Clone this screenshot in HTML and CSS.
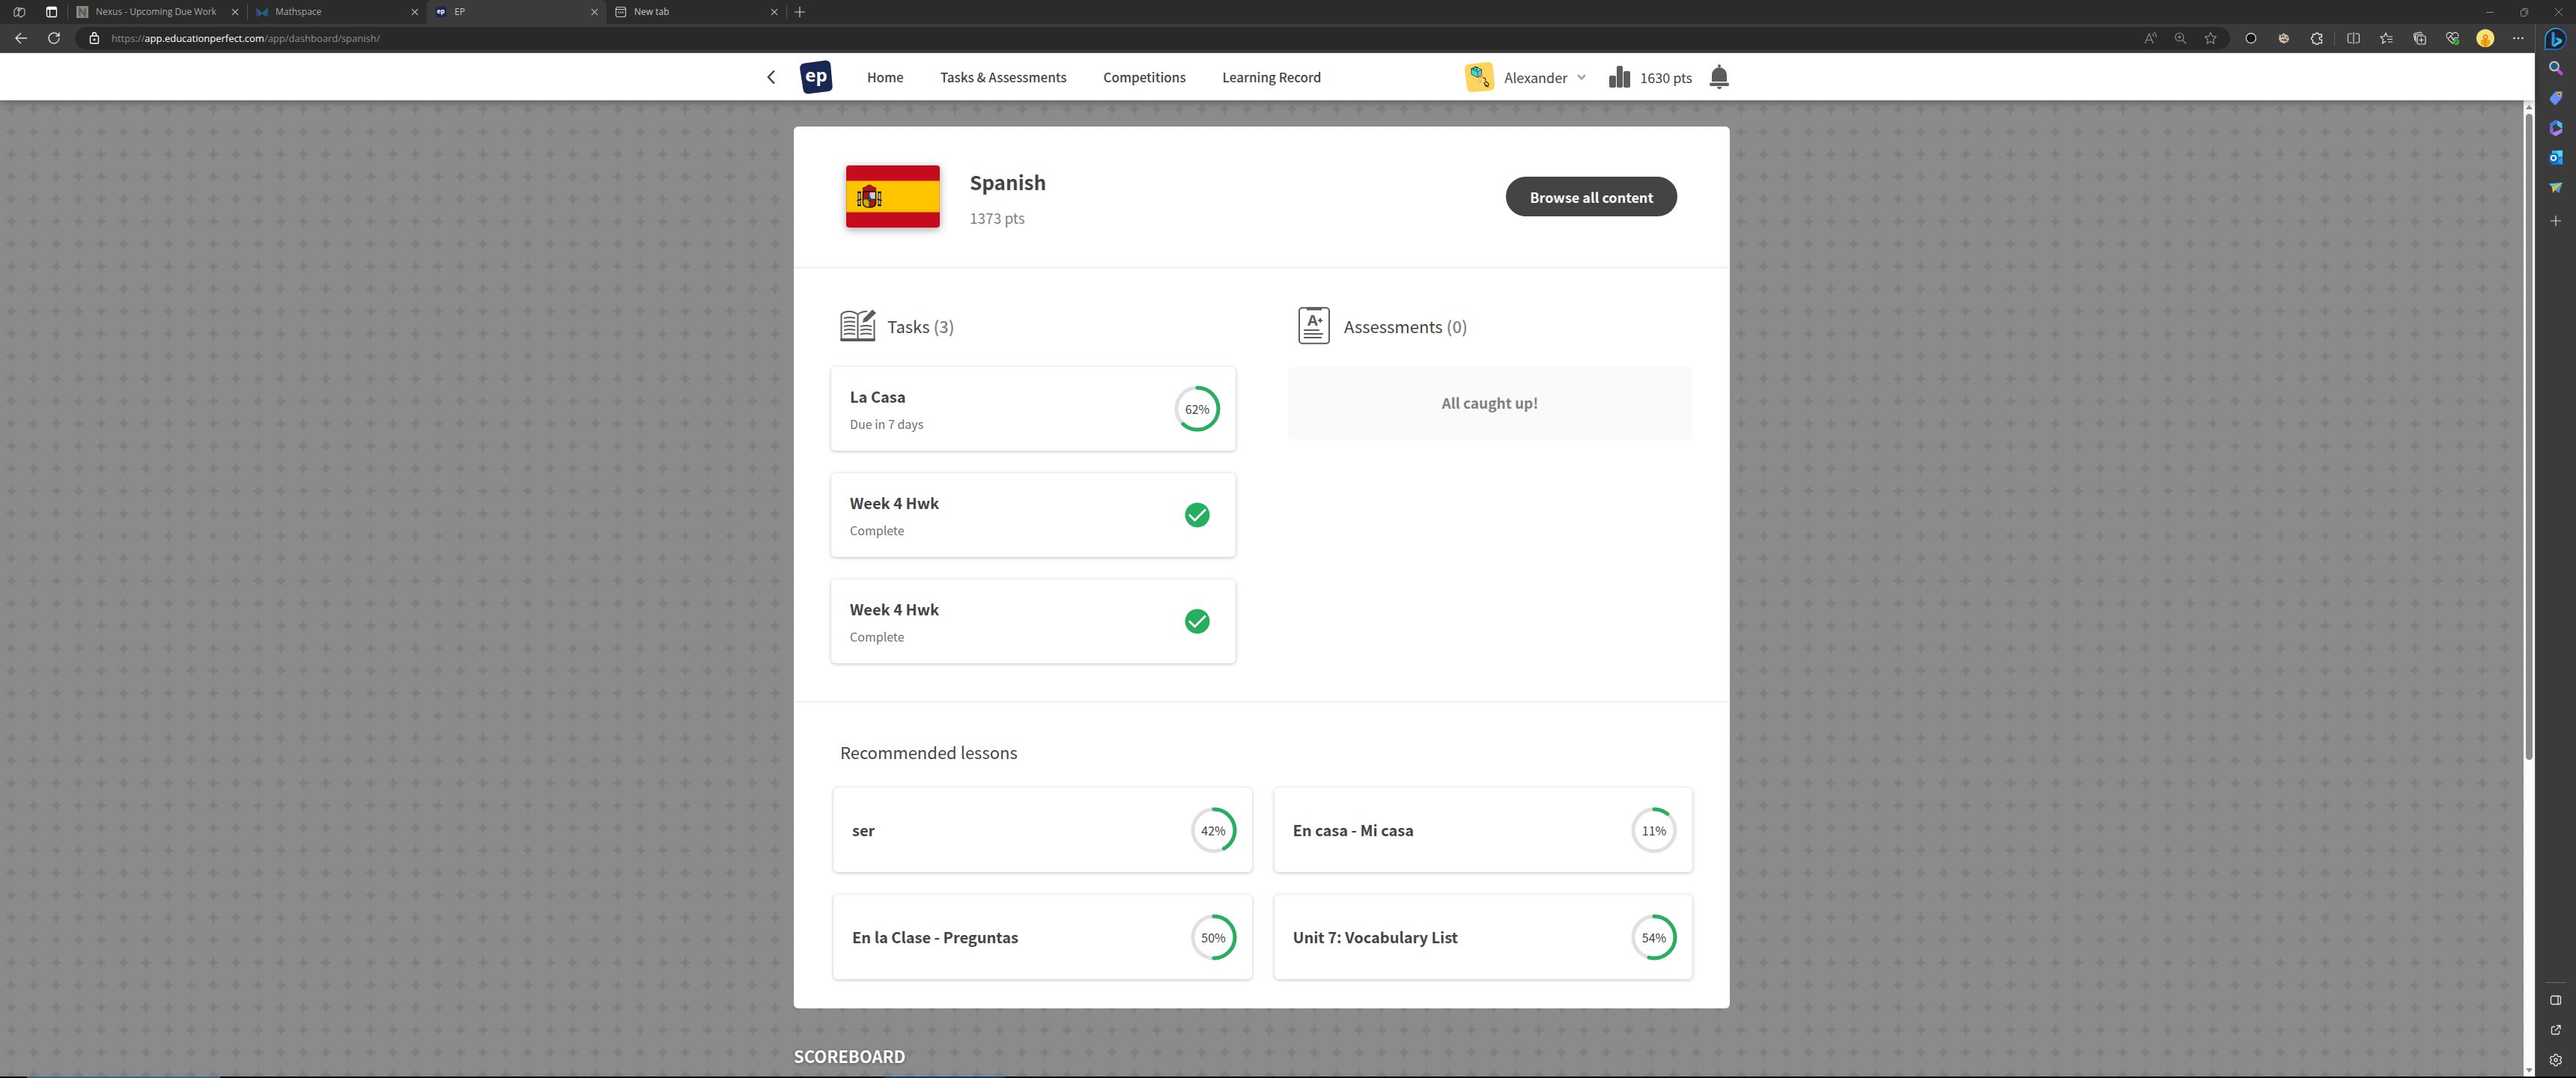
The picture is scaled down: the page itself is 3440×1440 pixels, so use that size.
FILE: index.html
```html
<!DOCTYPE html>
<html lang="en">
<head>
<meta charset="utf-8">
<title>EP</title>
<link rel="stylesheet" href="styles.css">
</head>
<body>
<div class="tabbar">
  <button class="tabbar-tool" aria-label="Workspaces"><svg width="18" height="18" viewBox="0 0 18 18" fill="none" stroke="#bdbdbd" stroke-width="1.2"><path d="M2 6.500 6 3l2 1v8l-4 3-2-1zM6 7l4-3.500L12 5M8 8l5-4 3 1.500v7L11 16 8 14.500z"/></svg></button>
  <button class="tabbar-tool" aria-label="Tab actions"><svg width="16" height="16" viewBox="0 0 16 16" fill="none" stroke="#fff" stroke-width="1.300"><rect x="1.500" y="1.500" width="13" height="13" rx="2"/><path d="M2 3.500h12" stroke-width="3"/><path d="M5.500 5v9"/></svg></button>
  <div class="tab tab-lined">
    <svg width="16" height="16" viewBox="0 0 16 16"><rect width="16" height="16" fill="#858585"/><path d="M4.500 13V3.500l7 9V3" fill="none" stroke="#5b5340" stroke-width="2"/></svg>
    <span class="tab-name">Nexus - Upcoming Due Work</span>
    <button class="tab-close" aria-label="Close tab"><svg width="10" height="10" viewBox="0 0 10 10" stroke="currentColor" stroke-width="1.100"><path d="m1 1 8 8M9 1 1 9"/></svg></button>
  </div>
  <div class="tab tab-lined">
    <svg width="16" height="16" viewBox="0 0 16 16"><path d="M0 2 8 9l8-7v12H0z" fill="#1f6a72"/><path d="M0 2v12h5z" fill="#3b3a80"/><path d="M16 2v12h-5z" fill="#1d4f8c"/><path d="m4 14 4-4 4 4z" fill="#2b2b2b"/></svg>
    <span class="tab-name">Mathspace</span>
    <button class="tab-close" aria-label="Close tab"><svg width="10" height="10" viewBox="0 0 10 10" stroke="currentColor" stroke-width="1.100"><path d="m1 1 8 8M9 1 1 9"/></svg></button>
  </div>
  <div class="tab tab-active">
    <svg width="16" height="16" viewBox="0 0 46 46"><path d="M7 5 35 1q7 0 8 7l2 29q0 4-6 5L13 45q-6 0-7-6L1 12q0-6 6-7z" fill="#1a2754"/><text x="22" y="30" class="logo-text">ep</text></svg>
    <span class="tab-name">EP</span>
    <button class="tab-close" aria-label="Close tab"><svg width="10" height="10" viewBox="0 0 10 10" stroke="currentColor" stroke-width="1.100"><path d="m1 1 8 8M9 1 1 9"/></svg></button>
  </div>
  <div class="tab tab-last">
    <svg width="16" height="16" viewBox="0 0 16 16" fill="none" stroke="#c8c8c8" stroke-width="1.200"><rect x="1.500" y="1.500" width="13" height="13" rx="2.500"/><path d="M2 4.500h12"/><path d="M4.500 8.500h7" stroke-dasharray="1.500 1.200" stroke-width="2"/></svg>
    <span class="tab-name">New tab</span>
    <button class="tab-close" aria-label="Close tab"><svg width="10" height="10" viewBox="0 0 10 10" stroke="currentColor" stroke-width="1.100"><path d="m1 1 8 8M9 1 1 9"/></svg></button>
  </div>
  <button class="tab-new" aria-label="New tab"><svg width="14" height="14" viewBox="0 0 14 14" stroke="#cfcfcf" stroke-width="1.200"><path d="M7 0v14M0 7h14"/></svg></button>
  <div class="window-controls">
    <button aria-label="Minimize"><svg width="12" height="12" viewBox="0 0 12 12" stroke="#909090"><path d="M1 6.500h10"/></svg></button>
    <button aria-label="Restore"><svg width="12" height="12" viewBox="0 0 12 12" fill="none" stroke="#909090"><rect x="1.500" y="3.500" width="7" height="8" rx="1"/><path d="M3.500 1.500h6q1 0 1 1v7"/></svg></button>
    <button aria-label="Close"><svg width="12" height="12" viewBox="0 0 12 12" stroke="#909090"><path d="m1 1 10 10M11 1 1 11"/></svg></button>
  </div>
</div>

<div class="window">
  <div class="main">
    <div class="toolbar">
      <button class="tool-nav" aria-label="Back"><svg width="18" height="18" viewBox="0 0 18 18" fill="none" stroke="#e8e8e8" stroke-width="1.300"><path d="M17 9H2M9 2 2 9l7 7"/></svg></button>
      <button class="tool-nav" aria-label="Refresh"><svg width="18" height="18" viewBox="0 0 18 18" fill="none" stroke="#e8e8e8" stroke-width="1.400"><path d="M16 9a7 7 0 1 1-2-5l2 2M16 1.500V6h-4.500"/></svg></button>
      <div class="address">
        <svg width="16" height="18" viewBox="0 0 16 18" fill="none" stroke="#fff" stroke-width="1.400"><rect x="2.500" y="6" width="11" height="10" rx="1.500"/><path d="M5.500 6V4a2.500 2.500 0 0 1 5 0v2"/><circle cx="8" cy="11" r=".8" fill="#fff"/></svg>
        <span class="url">https://<b>app.educationperfect.com</b>/app/dashboard/spanish/</span>
        <button aria-label="Read aloud"><svg width="18" height="18" viewBox="0 0 18 18" fill="none" stroke="#8f8f8f" stroke-width="1.200"><path d="M1.500 16 7 3l5.500 13M3.500 11.500h7M11 3q2 1.500 2 4M13.500 1Q17 4 16.500 8"/></svg></button>
        <button aria-label="Zoom"><svg width="18" height="18" viewBox="0 0 18 18" fill="none" stroke="#8f8f8f" stroke-width="1.200"><circle cx="7.500" cy="7.500" r="5.500"/><path d="m11.500 11.500 5 5M7.500 5v5M5 7.500h5"/></svg></button>
        <button aria-label="Favourite"><svg width="18" height="18" viewBox="0 0 18 18" fill="none" stroke="#8f8f8f" stroke-width="1.200" stroke-linejoin="round"><path d="m9 1.500 2.300 4.900 5.200.7-3.800 3.700.9 5.400L9 13.600l-4.600 2.600.9-5.400L1.500 7.100l5.200-.7z"/></svg></button>
      </div>
      <div class="extensions">
        <button aria-label="Extension T"><svg width="18" height="18" viewBox="0 0 18 18"><circle cx="9" cy="9" r="6.500" fill="#111" stroke="#ddd" stroke-width="1.300"/><path d="M7 6.500h4M9 6.500v6" stroke="#333"/></svg></button>
        <button aria-label="Extension cookie"><svg width="18" height="18" viewBox="0 0 18 18"><path d="M3 4l3 1 2-3 3 2 3 1 2 5-2 4-5 2-5-2-2-4z" fill="#c9bba8"/><path d="M5 6l2 2M8 5l1 3M12 7l2 2M6 11l5 1M10 10l3 3" stroke="#4a4038" stroke-width="1.300"/></svg></button>
        <button aria-label="Extensions"><svg width="18" height="18" viewBox="0 0 18 18" fill="none" stroke="#e8e8e8" stroke-width="1.300" stroke-linejoin="round"><path d="M3.500 4h3.500a2 2 0 0 1 4 0h4.500v3.500h-1.500a1.800 1.800 0 0 0 0 3.600h1.500V15.500H11a2 2 0 0 1-4 0H3.500V11.500a2 2 0 0 1 0-4z"/></svg></button>
      </div>
      <div class="browser-tools">
        <button aria-label="Split screen"><svg width="18" height="18" viewBox="0 0 18 18" fill="none" stroke="#d8d8d8" stroke-width="1.200"><path d="M7 3H3Q1.500 3 1.500 4.500v9Q1.500 15 3 15h4M11 3h4q1.500 0 1.500 1.500v9Q16.500 15 15 15h-4M9 1v16"/></svg></button>
        <button aria-label="Favourites"><svg width="18" height="18" viewBox="0 0 18 18" fill="none" stroke="#e8e8e8" stroke-width="1.200" stroke-linejoin="round"><path d="M10 7 8 2 6 6.500l-5 .5 3.500 3.500-1 5.500L8 13M11 7h6M10 10.500h7M11 14h6"/></svg></button>
        <button aria-label="Collections"><svg width="18" height="18" viewBox="0 0 18 18" fill="none" stroke="#e8e8e8" stroke-width="1.200"><path d="M3 12 1.500 4.500q0-1.500 1.500-2l7-1.500q1.500 0 2 1.500"/><path d="M4 14 3.500 6Q3.500 4 5.500 4H14"/><rect x="6" y="6" width="11" height="11" rx="2"/><path d="M11.500 8.500v6M8.500 11.500h6"/></svg></button>
        <button aria-label="Browser essentials"><svg width="18" height="18" viewBox="0 0 18 18" fill="none" stroke="#e8e8e8" stroke-width="1.200"><path d="M1.500 7a4 4 0 0 1 7.500-3 4 4 0 0 1 7.500 3M3 10l6 6 2-2M1 8.500h4l2-3 3 6 2-3h5"/><circle cx="14" cy="14" r="4" fill="#3faf46" stroke="none"/><path d="m12.500 15.500 3-3" stroke="#14501a"/></svg></button>
        <button aria-label="Profile"><svg width="24" height="24" viewBox="0 0 24 24"><circle cx="12" cy="12" r="12" fill="#f5e27a"/><path d="M6 15q6-4 12 0v5q-3 3-6 3.500Q9 23 6 20z" fill="#f2a60c"/><path d="M12 14v9.500" stroke="#c86a00"/><circle cx="12" cy="10.500" r="3.500" fill="#f77f2a"/><circle cx="12" cy="10.500" r="1.500" fill="#ffd9b0"/></svg></button>
        <button aria-label="Settings and more"><svg width="18" height="18" viewBox="0 0 18 18" fill="#e8e8e8"><circle cx="3.500" cy="9" r="1.300"/><circle cx="9" cy="9" r="1.300"/><circle cx="14.500" cy="9" r="1.300"/></svg></button>
      </div>
    </div>

    <header class="site-header">
      <div class="site-header-inner">
        <a class="back" href="#" aria-label="Back"><svg width="14" height="20" viewBox="0 0 14 20" fill="none" stroke="#444" stroke-width="2.500"><path d="M11 1.500 3 10l8 8.500"/></svg></a>
        <a class="logo" href="#" aria-label="Education Perfect"><svg width="46" height="46" viewBox="0 0 46 46"><path d="M7 4.500 35 .8q6.500-.5 7.300 6.200l2.400 28q.3 6-5.700 7L13 45.300q-6.500.5-7.500-6L1.200 12Q.800 5.500 7 4.500z" fill="#1a2754"/><text x="23" y="29" class="logo-text">ep</text></svg></a>
        <nav class="site-nav">
          <a href="#">Home</a>
          <a href="#">Tasks &amp; Assessments</a>
          <a href="#">Competitions</a>
          <a href="#">Learning Record</a>
        </nav>
        <div class="account">
          <button class="user">
            <svg width="40" height="40" viewBox="0 0 40 40"><path d="M6 2.500 31 0q6-.3 6.700 5.500L40 31q.2 6-5.500 7L10 40q-6 .2-7-5.500L0 9.500Q0 3.500 6 2.500z" fill="#ffd45e"/><path d="m8.500 9 6-3 8 4v7l-5 3.500-8.500-4z" fill="#4fd8c8" stroke="#245e59"/><path d="m8.500 9 8.500 4 6-3M17 13l1 7.500" fill="none" stroke="#245e59"/><path d="m11 8 2 1M15 10l2 0M14 6.500l3 1" stroke="#163f3c" stroke-width="1.500"/><path d="m18.500 17 3-1.500 2.500 3-3 2.500z" fill="#ff6f61"/><circle cx="19.500" cy="25.500" r="1.500" fill="#fff" stroke="#99834a" stroke-width=".8"/><path d="M24 20.500q5 .5 3.500 4.500M26 28l3-2 3 3-1 4-3-1zM28 30l3 3" fill="none" stroke="#3d3215" stroke-width="1.200"/></svg>
            <span>Alexander</span>
            <svg width="12" height="8" viewBox="0 0 12 8" fill="none" stroke="#a0a0a0" stroke-width="2.500"><path d="m1 1.200 5 5 5-5"/></svg>
          </button>
          <div class="points">
            <svg width="28" height="30" viewBox="0 0 28 30" fill="#5c5c5c"><rect y="13" width="9" height="16" rx="2"/><rect x="10" width="8" height="29" rx="2"/><rect x="19" y="7" width="9" height="22" rx="2"/></svg>
            <span>1630 pts</span>
          </div>
          <button class="bell" aria-label="Notifications"><svg width="26" height="34" viewBox="0 0 26 34" fill="#5c5c5c"><circle cx="13" cy="2" r="2"/><path d="M3 23V14a10 10 0 0 1 20 0v9z"/><rect y="24.500" width="26" height="4.500" rx="2"/><path d="M10 30h6q0 3-3 3t-3-3z"/></svg></button>
        </div>
      </div>
    </header>

    <div class="viewport">
      <div class="scroll">
        <main class="content">
          <div class="sheet">
            <section class="subject">
              <svg class="flag" width="125" height="83" viewBox="0 0 125 83"><rect width="125" height="83" fill="#c60b1e"/><rect y="20.500" width="125" height="42" fill="#ffc400" stroke="#e2601a" stroke-width=".8"/><path d="M23 34q-3-5 3-5 2-3 5-3t5 3q6 0 3 5l-8 1z" fill="#ad1519" stroke="#3a1010" stroke-width=".8"/><path d="M22.500 35h17v15q0 6-8.500 6t-8.500-6z" fill="#ad1519" stroke="#111" stroke-width="1.500"/><path d="M31 35.700h7.800V45H31z" fill="#ccc"/><path d="M23.200 45H31v10.200q-7.800 0-7.800-5.500z" fill="#c8b100"/><path d="M22.500 45h17M31 35v20" stroke="#222" stroke-width=".8"/><ellipse cx="31" cy="45" rx="2" ry="2.800" fill="#005bbf" stroke="#111" stroke-width=".5"/><path d="M17.500 36v17M44.500 36v17" stroke="#111" stroke-width="4"/><path d="M17.500 37v15M44.500 37v15" stroke="#ccc" stroke-width="2"/><path d="M15 35.500h5M15 53.500h5M42 35.500h5M42 53.500h5M14.500 47l6-2M41.500 45l6 2" stroke="#111" stroke-width="1.500"/></svg>
              <div class="subject-text">
                <h1>Spanish</h1>
                <p>1373 pts</p>
              </div>
              <button class="browse">Browse all content</button>
            </section>

            <section class="work">
              <div class="work-column">
                <h2 class="work-head">
                  <svg width="48" height="44" viewBox="0 0 48 44" fill="none" stroke="#5c5c5c" stroke-width="2"><path d="M23.500 7Q18 3 12 3 5 3 1.500 7v34h44V14M23.500 7v33M23.500 7Q28 3 36 3" stroke-width="2"/><path d="M2 41h43" stroke-width="4" stroke-linecap="round"/><path d="M5 12q8-2 15 0M5 17.500q8-2 15 0M5 23q8-2 15 0M5 28q8-2 15 0M5 33.500q8-2 15 0M27 23q8-2 15 0M27 28q8-2 15 0M27 33.500q8-2 15 0"/><path d="m30 18 1-5L43 .5l5 4.500-12 11.500z" fill="#5c5c5c" stroke="none"/></svg>
                  <span>Tasks <span class="count">(3)</span></span>
                </h2>
                <a class="card" href="#">
                  <span class="card-text"><b>La Casa</b><small>Due in 7 days</small></span>
                  <span class="ring"><svg viewBox="0 0 62 62"><circle class="ring-track" cx="31" cy="31" r="28"/><circle class="ring-value" cx="31" cy="31" r="28" pathLength="100" stroke-dasharray="62 100" transform="rotate(-90 31 31)"/></svg><span>62%</span></span>
                </a>
                <a class="card" href="#">
                  <span class="card-text"><b>Week 4 Hwk</b><small>Complete</small></span>
                  <span class="done"><svg width="34" height="34" viewBox="0 0 34 34"><circle cx="17" cy="17" r="16.500" fill="#27ae60"/><path d="m6 16.500 7.500 7.500L28 9.500" fill="none" stroke="#fff" stroke-width="2.800"/></svg></span>
                </a>
                <a class="card" href="#">
                  <span class="card-text"><b>Week 4 Hwk</b><small>Complete</small></span>
                  <span class="done"><svg width="34" height="34" viewBox="0 0 34 34"><circle cx="17" cy="17" r="16.500" fill="#27ae60"/><path d="m6 16.500 7.500 7.500L28 9.500" fill="none" stroke="#fff" stroke-width="2.800"/></svg></span>
                </a>
              </div>
              <div class="work-column">
                <h2 class="work-head">
                  <svg width="48" height="50" viewBox="0 0 48 50" fill="none" stroke="#5c5c5c" stroke-width="2"><rect x="3" y="1.200" width="40" height="47.600" rx="4"/><path d="M13 2.500h20" stroke-width="4"/><path d="M10 31h19M10 36h24M10 41h22" stroke-width="2.200" stroke-linecap="round"/><path d="M28 18h6M31 15v6"/><text x="14" y="25" class="grade">A</text></svg>
                  <span>Assessments <span class="count">(0)</span></span>
                </h2>
                <p class="empty">All caught up!</p>
              </div>
            </section>

            <section class="lessons">
              <h2>Recommended lessons</h2>
              <div class="lesson-grid">
                <a class="card" href="#">
                  <span class="card-text"><b>ser</b></span>
                  <span class="ring"><svg viewBox="0 0 62 62"><circle class="ring-track" cx="31" cy="31" r="28"/><circle class="ring-value" cx="31" cy="31" r="28" pathLength="100" stroke-dasharray="42 100" transform="rotate(-90 31 31)"/></svg><span>42%</span></span>
                </a>
                <a class="card" href="#">
                  <span class="card-text"><b>En casa - Mi casa</b></span>
                  <span class="ring"><svg viewBox="0 0 62 62"><circle class="ring-track" cx="31" cy="31" r="28"/><circle class="ring-value" cx="31" cy="31" r="28" pathLength="100" stroke-dasharray="11 100" transform="rotate(-90 31 31)"/></svg><span>11%</span></span>
                </a>
                <a class="card" href="#">
                  <span class="card-text"><b>En la Clase - Preguntas</b></span>
                  <span class="ring"><svg viewBox="0 0 62 62"><circle class="ring-track" cx="31" cy="31" r="28"/><circle class="ring-value" cx="31" cy="31" r="28" pathLength="100" stroke-dasharray="50 100" transform="rotate(-90 31 31)"/></svg><span>50%</span></span>
                </a>
                <a class="card" href="#">
                  <span class="card-text"><b>Unit 7: Vocabulary List</b></span>
                  <span class="ring"><svg viewBox="0 0 62 62"><circle class="ring-track" cx="31" cy="31" r="28"/><circle class="ring-value" cx="31" cy="31" r="28" pathLength="100" stroke-dasharray="54 100" transform="rotate(-90 31 31)"/></svg><span>54%</span></span>
                </a>
              </div>
            </section>
          </div>
          <h2 class="scoreboard">SCOREBOARD</h2>
        </main>
      </div>
      <div class="scrollbar">
        <svg width="9" height="6" viewBox="0 0 9 6"><path d="M0 6 4.500 0 9 6z" fill="#8a8a8a"/></svg>
        <div class="scroll-track"><div class="scroll-thumb"></div></div>
        <svg width="9" height="6" viewBox="0 0 9 6"><path d="M0 0h9L4.500 6z" fill="#8a8a8a"/></svg>
      </div>
    </div>
  </div>

  <aside class="sidebar">
    <button class="bing" aria-label="Bing Chat"><svg width="32" height="32" viewBox="0 0 32 32"><defs><linearGradient id="rim" x1="0" y1="0" x2="1" y2="1"><stop offset="0" stop-color="#2bc4f0"/><stop offset="1" stop-color="#1b4fd8"/></linearGradient><linearGradient id="bee" x1="0" y1="0" x2="1" y2="1"><stop offset="0" stop-color="#1c7df0"/><stop offset="1" stop-color="#35d6f5"/></linearGradient></defs><path d="M2 30V16A14 14 0 1 1 16 30q-3 .5-5-.5L2 30z" fill="#1f2128" stroke="url(#rim)" stroke-width="1.500"/><path d="m10.500 6 4 1.500v12l-2.500 4L20 19l-3-1.500-1.500-4L23 16q2.500 2 .5 5l-8 5q-2 1-3 0l-2-2z" fill="url(#bee)"/></svg></button>
    <button aria-label="Search"><svg width="20" height="20" viewBox="0 0 20 20"><path d="m12.500 12.500 5 5" stroke="#c547f0" stroke-width="4" stroke-linecap="round"/><circle cx="8" cy="7.500" r="5.800" fill="#1d5f7e" stroke="#b9c2c8" stroke-width="2.200"/></svg></button>
    <button aria-label="Shopping"><svg width="20" height="20" viewBox="0 0 20 20"><path d="M9 1.500 17 .8q1.800 0 1.800 1.800L18 10l-7.500 8.500q-1.500 1-3 0L2.500 13q-1.500-1.500 0-3.500z" fill="#6a8cf8"/><circle cx="14.500" cy="5" r="2" fill="#3c3a20" stroke="#f2c200" stroke-width="1.300"/></svg></button>
    <button aria-label="Microsoft 365"><svg width="20" height="22" viewBox="0 0 20 22"><path d="M10 0 2 4.500V15l4 3V8l6-3 6 3V4.500z" fill="#4a6fd8"/><path d="M12 1l6.500 3.800V12L12 8z" fill="#45c4f0"/><path d="M18.500 11v6L10 22l-7-4 11-4z" fill="#b07be0"/><path d="M2 9v8l4 2 1-7z" fill="#8a62d8"/><path d="m10 7 4 2v4l-4 2-3-2V9z" fill="#3b3b3b"/></svg></button>
    <button aria-label="Outlook"><svg width="20" height="22" viewBox="0 0 20 22"><rect x="5" y="1" width="14" height="12" rx="1" fill="#35b8f1"/><path d="M12 1h7v7h-7z" fill="#5ad5fb"/><path d="M4 10h15v10H4z" fill="#1473c8"/><path d="m19 10-9 6 9 4z" fill="#2a9be8"/><rect x="1" y="5" width="12" height="12" rx="1.500" fill="#0b6fc6"/><circle cx="7" cy="11" r="3.200" fill="none" stroke="#fff" stroke-width="1.800"/></svg></button>
    <button aria-label="Drop"><svg width="20" height="20" viewBox="0 0 20 20"><path d="M1 4.500 19 3l-5 14-5-4z" fill="#3f9df0"/><path d="m1 4.500 18-1.500L7 11z" fill="#49c9e8"/><path d="M19 3 5 9l1 8 3-4z" fill="#f5b81c"/></svg></button>
    <button class="sidebar-add" aria-label="Customise"><svg width="14" height="14" viewBox="0 0 14 14" stroke="#d8d8d8" stroke-width="1.200"><path d="M7 0v14M0 7h14"/></svg></button>
    <div class="sidebar-bottom">
      <button aria-label="Hide sidebar"><svg width="16" height="14" viewBox="0 0 16 14" fill="none" stroke="#e8e8e8" stroke-width="1.300"><rect x="1.500" y="1.500" width="13" height="11" rx="2"/><path d="M11 1.500v11"/></svg></button>
      <button aria-label="Open link"><svg width="16" height="16" viewBox="0 0 16 16" fill="none" stroke="#e8e8e8" stroke-width="1.300"><path d="M7 3.500H4.500Q2.500 3.500 2.500 5.500v6q0 2 2 2h6q2 0 2-2V9M9 2h5v5M14 2 7 9"/></svg></button>
      <button aria-label="Settings"><svg width="18" height="18" viewBox="0 0 18 18" fill="none" stroke="#e8e8e8" stroke-width="1.300" stroke-linejoin="round"><path d="m7.500 1.500 3 0 .7 2.200 1.700 1 2.200-.6 1.500 2.600L15 8.300v1.700l1.600 1.500-1.500 2.500-2.200-.5-1.700 1-.7 2.200h-3l-.7-2.200-1.700-1-2.200.5L1.400 11.500 3 10V8.300L1.400 6.700l1.500-2.600 2.200.6 1.700-1z"/><circle cx="9" cy="9" r="2"/></svg></button>
    </div>
  </aside>
</div>
<div class="taskbar"><i class="task-light"></i><i class="task-dark"></i></div>
</body>
</html>
```
FILE: styles.css
```css
* { box-sizing: border-box; }

body {
  margin: 0;
  height: 100vh;
  display: flex;
  flex-direction: column;
  overflow: hidden;
  font-family: "Noto Sans CJK SC", "Open Sans", sans-serif;
  color: #444;
  background: #3b3b3b;
}

h1, h2, p { margin: 0; font-weight: 400; }
a { color: inherit; text-decoration: none; }
svg { display: block; flex: none; }
button {
  display: flex;
  align-items: center;
  justify-content: center;
  padding: 0;
  border: 0;
  background: none;
  color: inherit;
  font: inherit;
}

/* Browser tab strip */
.tabbar {
  flex: none;
  display: flex;
  align-items: center;
  height: 32px;
  padding-left: 4px;
  background: #2b2b2b;
  color: #a8a8a8;
  font: 12px/16px "Open Sans", sans-serif;
}
.tabbar-tool { width: 43px; height: 32px; }
.tab {
  display: flex;
  align-items: center;
  gap: 10px;
  width: 240px;
  height: 32px;
  padding: 0 11px;
}
.tab-lined { height: 20px; border-left: 1px solid #555; }
.tab-name { flex: 1; white-space: nowrap; }
.tab-close { color: #b0b0b0; }
.tab-active { background: #3b3b3b; border-radius: 6px 6px 0 0; color: #c8c8c8; }
.tab-last { color: #c8c8c8; }
.tab-new { width: 34px; height: 20px; border-left: 1px solid #555; }
.window-controls { display: flex; margin-left: auto; }
.window-controls button { width: 46px; height: 32px; }

.window { flex: 1; display: flex; min-height: 0; }
.main { flex: 1; display: flex; flex-direction: column; min-width: 0; }

/* Address bar and extensions */
.toolbar {
  flex: none;
  display: flex;
  align-items: center;
  height: 39px;
  padding-left: 6px;
  border-bottom: 1px solid #6a6a6a;
}
.tool-nav { width: 44px; height: 30px; }
.address {
  flex: 1;
  display: flex;
  align-items: center;
  height: 30px;
  margin-left: 6px;
  padding: 0 6px 0 18px;
  border-radius: 15px;
  background: #292929;
  color: #8f8f8f;
  font: 13px/18px "Open Sans", sans-serif;
}
.address button { width: 40px; height: 30px; }
.url { flex: 1; margin-left: 15px; }
.url b { font-weight: 400; color: #fff; }
.extensions { display: flex; padding: 0 1px 0 6px; border-right: 1px solid #5c5c5c; }
.extensions button { width: 44px; height: 20px; }
.browser-tools { display: flex; align-items: center; padding: 0 0 0 3px; }
.browser-tools button { width: 44px; height: 30px; }

/* Site header */
.site-header {
  flex: none;
  height: 63px;
  padding-right: 15px;
  background: #fff;
  box-shadow: 0 2px 10px rgba(0, 0, 0, .35);
  z-index: 1;
}
.site-header-inner {
  display: flex;
  align-items: center;
  max-width: 1324px;
  height: 63px;
  margin: 0 auto;
  padding-right: 38px;
}
.back { width: 44px; }
.logo-text { fill: #fff; font: 700 24px "Open Sans", sans-serif; text-anchor: middle; }
.site-nav { display: flex; gap: 49px; margin-left: 45px; font-size: 17px; font-weight: 500; line-height: 24px; }
.account { display: flex; align-items: center; margin-left: auto; font-size: 18px; line-height: 24px; }
.user { gap: 13px; }
.points { display: flex; align-items: center; gap: 13px; margin-left: 31px; }
.bell { margin-left: 23px; }

/* Scrolling page */
.viewport { flex: 1; display: flex; min-height: 0; }
.scroll {
  flex: 1;
  overflow: hidden;
  background: #8b8b8b url("data:image/svg+xml,%3Csvg xmlns='http://www.w3.org/2000/svg' width='30' height='30'%3E%3Cpath d='M15 4.500Q16.500 10.500 22.500 12 16.500 13.500 15 19.500 13.500 13.500 7.500 12 13.500 10.500 15 4.500z' fill='%237f7f7f' stroke='%237f7f7f' stroke-width='.6'/%3E%3C/svg%3E");
}
.scrollbar {
  flex: none;
  display: flex;
  flex-direction: column;
  align-items: center;
  gap: 6px;
  width: 15px;
  padding: 6px 0 5px;
  background: #fcfcfc;
}
.scroll-track { flex: 1; width: 9px; }
.scroll-thumb { height: 68%; border-radius: 5px; background: #8a8a8a; }

.content { max-width: 1250px; margin: 0 auto; padding-top: 35px; }
.sheet { border-radius: 6px; background: #fff; }

.subject {
  display: flex;
  align-items: center;
  min-height: 190px;
  padding: 0 70px;
  border-bottom: 3px solid #f2f2f2;
}
.flag { border-radius: 4px; box-shadow: 0 3px 12px rgba(0, 0, 0, .35); }
.subject-text { margin-left: 40px; padding-top: 8px; }
.subject-text h1 { font-size: 26px; font-weight: 700; line-height: 40px; }
.subject-text p { margin-top: 8px; color: #808080; font-size: 19px; line-height: 40px; }
.browse {
  height: 53px;
  margin-left: auto;
  padding: 0 32px;
  border-radius: 27px;
  background: #444;
  color: #fff;
  font-size: 18px;
  font-weight: 700;
}

.work {
  display: grid;
  grid-template-columns: 1fr 1fr;
  gap: 70px;
  padding: 51px 50px 50px;
  border-bottom: 3px solid #f2f2f2;
}
.work-column { display: flex; flex-direction: column; gap: 30px; }
.work-head {
  display: flex;
  align-items: center;
  gap: 15px;
  height: 50px;
  padding-left: 12px;
  font-size: 22px;
  line-height: 30px;
}
.count { color: #808080; font-weight: 500; }
.grade { fill: #5c5c5c; stroke: none; font: 700 20px "Open Sans", sans-serif; }

.card {
  display: flex;
  align-items: center;
  justify-content: space-between;
  min-height: 112px;
  padding: 0 20px 0 25px;
  border-radius: 6px;
  background: #fff;
  box-shadow: 0 1px 5px rgba(0, 0, 0, .25);
}
.card-text { display: flex; flex-direction: column; gap: 6px; }
.card-text b { font-size: 20px; font-weight: 700; line-height: 30px; }
.card-text small { color: #707070; font-size: 16px; line-height: 30px; }
.work .card-text { padding-top: 4px; }
.ring { display: grid; width: 62px; height: 62px; place-items: center; font-size: 16px; line-height: 20px; }
.ring > * { grid-area: 1 / 1; }
.ring-track, .ring-value { fill: none; stroke: #e0e0e0; stroke-width: 5; }
.ring-value { stroke: #27ae60; stroke-linecap: round; }
.done { display: flex; justify-content: center; width: 62px; }

.empty {
  padding: 33px 0 34px;
  border-radius: 6px;
  background: #fafafa;
  color: #808080;
  font-size: 19px;
  font-weight: 700;
  line-height: 30px;
  text-align: center;
}

.lessons { padding: 45px 50px 39px 53px; }
.lessons h2 { padding-left: 9px; font-size: 22px; line-height: 40px; }
.lesson-grid { display: grid; grid-template-columns: 1fr 1fr; gap: 30px; margin-top: 28px; }
.lesson-grid .card { min-height: 113px; }

.scoreboard {
  margin-top: 43px;
  color: #fff;
  font-size: 22px;
  font-weight: 700;
  line-height: 40px;
  text-shadow: 0 1px 4px rgba(0, 0, 0, .4);
}

/* Browser sidebar */
.sidebar {
  flex: none;
  display: flex;
  flex-direction: column;
  align-items: center;
  width: 55px;
  border-left: 1px solid #5c5c5c;
}
.sidebar button { width: 40px; height: 40px; }
.sidebar .bing { height: 39px; }
.sidebar .sidebar-add { margin-top: 4px; }
.sidebar-bottom {
  display: flex;
  flex-direction: column;
  align-items: center;
  width: 28px;
  margin-top: auto;
  padding: 3px 0 2px;
  border-top: 1px solid #6a6a6a;
}

/* Strip of the system taskbar */
.taskbar { flex: none; display: flex; height: 2px; background: #000; }
.task-light { width: 258px; margin-left: 36px; background: #3c6284; }
.task-dark { width: 160px; margin-left: 887px; background: #003a6b; }
```
